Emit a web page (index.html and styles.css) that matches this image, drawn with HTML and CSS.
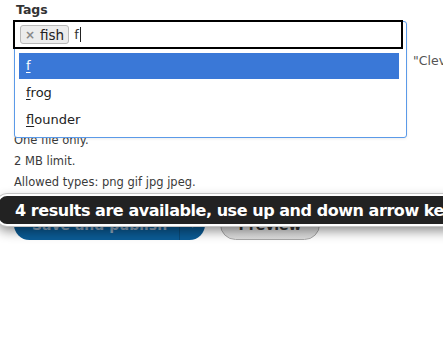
FILE: index.html
```html
<!DOCTYPE html>
<html>
<head>
<meta charset="utf-8">
<link rel="stylesheet" href="styles.css">
</head>
<body>
<div class="page">
  <div class="field">
    <div class="label">Tags</div>
    <div class="widget">
      <div class="menu-frame">
        <ul class="menu">
          <li class="item active"><u>f</u></li>
          <li class="item"><u>f</u>rog</li>
          <li class="item"><u>f</u>lounder</li>
        </ul>
      </div>
      <div class="input">
        <span class="chip"><span class="chip-x">×</span>fish</span>
        <span class="typed">f</span><span class="caret"></span>
      </div>
      <div class="side">"Cleveland"</div>
    </div>
    <div class="desc">
      <div class="desc-line">One file only.</div>
      <div class="desc-line">2 MB limit.</div>
      <div class="desc-line">Allowed types: png gif jpg jpeg.</div>
    </div>
  </div>
  <div class="actions">
    <div class="btn-primary">
      <span class="btn-primary-label">Save and publish</span>
      <span class="btn-primary-toggle">▾</span>
    </div>
    <div class="btn">Preview</div>
  </div>
  <div class="announce">4 results are available, use up and down arrow keys to navigate.</div>
</div>
</body>
</html>
```

FILE: styles.css
```css
html, body {
  margin: 0;
  padding: 0;
  background: #fff;
  overflow: hidden;
}
body {
  width: 443px;
  height: 356px;
  font-family: "DejaVu Sans", "Liberation Sans", sans-serif;
  color: #333;
}
.page {
  position: relative;
  width: 443px;
  height: 356px;
  overflow: hidden;
}
.field {
  padding: 3px 0 0 13px;
}
.label {
  font-weight: bold;
  font-size: 12.5px;
  line-height: 14px;
  height: 17px;
  padding-left: 3px;
  color: #333;
}
.widget {
  position: relative;
  width: 390px;
  height: 29px;
}
.menu-frame {
  position: absolute;
  left: 1px;
  top: 1px;
  width: 391px;
  height: 115px;
  border: 1px solid #5b9ae8;
  border-radius: 3px;
  background: #fff;
  box-shadow: 0 1px 3px rgba(0,0,0,0.08);
  z-index: 1;
}
.menu {
  list-style: none;
  margin: 0;
  padding: 31px 4px 0 4px;
}
.item {
  height: 27px;
  line-height: 28px;
  padding-left: 7px;
  font-size: 13px;
  color: #222;
}
.item.active {
  height: 26px;
  line-height: 26px;
  background: #3a78d7;
  color: #fff;
  margin-right: 3px;
}
.item u {
  text-underline-offset: 2px;
}
.input {
  position: relative;
  z-index: 2;
  box-sizing: border-box;
  width: 390px;
  height: 29px;
  border: 2px solid #000;
  background: #fff;
  display: flex;
  align-items: center;
  padding-left: 5px;
}
.chip {
  display: inline-flex;
  align-items: center;
  box-sizing: border-box;
  height: 19px;
  padding: 0 4px 0 4px;
  border: 1px solid #b9b9b9;
  border-radius: 3px;
  background: #ececec;
  font-size: 13.5px;
  color: #222;
}
.chip-x {
  color: #888;
  font-weight: bold;
  font-size: 12px;
  margin-right: 5px;
}
.typed {
  margin-left: 5px;
  font-size: 13px;
  color: #333;
}
.caret {
  display: inline-block;
  width: 1px;
  height: 15px;
  background: #222;
  margin-left: 1px;
}
.side {
  position: absolute;
  left: 400px;
  top: 33px;
  font-size: 12.5px;
  color: #555;
  white-space: nowrap;
}
.desc {
  margin-top: 81px;
  padding-left: 1px;
}
.desc-line {
  font-size: 11.5px;
  line-height: 21px;
  height: 21px;
  color: #3a3a3a;
}
.actions {
  display: flex;
  gap: 15px;
  padding: 16px 0 0 14px;
}
.btn-primary {
  display: flex;
  box-sizing: border-box;
  width: 191px;
  height: 31px;
  border-radius: 16px;
  background: #0b5b95;
  color: #8fa9c0;
  font-size: 14px;
  font-weight: bold;
  align-items: center;
}
.btn-primary-label {
  flex: 1;
  text-align: center;
  padding-left: 6px;
}
.btn-primary-toggle {
  width: 25px;
  height: 31px;
  line-height: 31px;
  text-align: center;
  border-left: 1px solid #0a4a78;
  color: #8fa9c0;
  font-size: 12px;
}
.btn {
  box-sizing: border-box;
  width: 100px;
  height: 31px;
  border: 1px solid #a8a8a8;
  border-radius: 16px;
  background: linear-gradient(#e6e6e6, #dcdcdc);
  color: #333;
  font-size: 14px;
  font-weight: bold;
  display: flex;
  align-items: center;
  justify-content: center;
}
.announce {
  position: absolute;
  left: -3px;
  top: 194px;
  width: 520px;
  height: 28px;
  box-sizing: content-box;
  background: #222;
  border: 2px solid #fff;
  border-radius: 10px;
  box-shadow: 0 0 0 1px #c4c4c4, 0 5px 12px rgba(0,0,0,0.45);
  color: #fff;
  font-size: 16px;
  font-weight: bold;
  letter-spacing: -0.45px;
  line-height: 30px;
  padding-left: 16px;
  white-space: nowrap;
  z-index: 5;
}
```
